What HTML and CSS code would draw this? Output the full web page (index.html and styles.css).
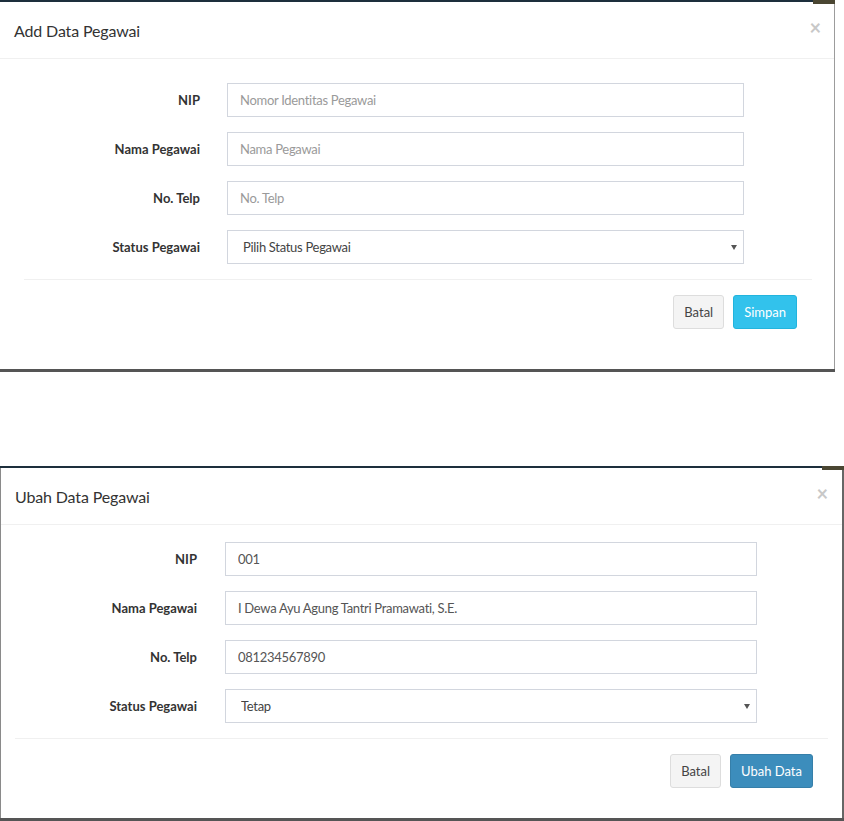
FILE: index.html
```html
<!DOCTYPE html>
<html>
<head>
<meta charset="utf-8">
<link rel="stylesheet" href="styles.css">
<title>Data Pegawai</title>
</head>
<body>
<section class="shot shot-add">
  <div class="strip"><span class="strip-img"></span></div>
  <div class="modal modal-add">
    <div class="modal-header">
      <h4 class="modal-title">Add Data Pegawai</h4>
      <span class="close">×</span>
    </div>
    <form class="form">
      <div class="row"><label>NIP</label><input class="control" placeholder="Nomor Identitas Pegawai"></div>
      <div class="row"><label>Nama Pegawai</label><input class="control" placeholder="Nama Pegawai"></div>
      <div class="row"><label>No. Telp</label><input class="control" placeholder="No. Telp"></div>
      <div class="row"><label>Status Pegawai</label><div class="select-wrap"><select class="control select"><option>Pilih Status Pegawai</option></select></div></div>
      <div class="footer">
        <button type="button" class="btn btn-default">Batal</button>
        <button type="button" class="btn btn-info">Simpan</button>
      </div>
    </form>
  </div>
  <div class="base"></div>
</section>

<section class="shot shot-edit">
  <div class="strip"><span class="strip-img"></span></div>
  <div class="modal modal-edit">
    <div class="modal-header">
      <h4 class="modal-title">Ubah Data Pegawai</h4>
      <span class="close">×</span>
    </div>
    <form class="form">
      <div class="row"><label>NIP</label><input class="control" value="001"></div>
      <div class="row"><label>Nama Pegawai</label><input class="control" value="I Dewa Ayu Agung Tantri Pramawati, S.E."></div>
      <div class="row"><label>No. Telp</label><input class="control" value="081234567890"></div>
      <div class="row"><label>Status Pegawai</label><div class="select-wrap"><select class="control select"><option>Tetap</option></select></div></div>
      <div class="footer">
        <button type="button" class="btn btn-default">Batal</button>
        <button type="button" class="btn btn-primary">Ubah Data</button>
      </div>
    </form>
  </div>
  <div class="base"></div>
</section>
</body>
</html>
```

FILE: styles.css
```css
* { box-sizing: border-box; }
html, body { margin: 0; padding: 0; background: #fff; }
body {
  width: 844px;
  font-family: Lato, "Liberation Sans", sans-serif;
  font-size: 13px;
  color: #333;
}

.shot { display: flex; flex-direction: column; }
.shot-add { width: 835px; }
.shot-edit { width: 844px; margin-top: 94px; }

.strip { position: relative; height: 2px; background: #1d2f3c; }
.strip-img { position: absolute; right: 0; top: 0; width: 22px; height: 4px; background: #4a4632; }

.modal { background: #fff; display: flex; flex-direction: column; }
.modal-add { height: 367px; border-right: 1px solid #9c9c9c; }
.modal-edit { height: 350px; border-left: 1px solid #8a8a8a; border-right: 2px solid #666; }

.base { height: 3px; background: #555; }

.modal-header {
  display: flex;
  justify-content: space-between;
  align-items: center;
  height: 57px;
  padding: 0 13px 0 14px;
  border-bottom: 1px solid #f0f0f0;
}
.modal-edit .modal-header { padding-left: 14px; padding-right: 14px; }
.modal-title {
  margin: 0;
  font-size: 16px;
  font-weight: 400;
  letter-spacing: -0.15px;
  color: #333;
}
.close {
  font-size: 20px;
  font-weight: 700;
  color: #c8c8c8;
  line-height: 1;
  margin-top: -6px;
}

.form { display: flex; flex-direction: column; gap: 15px; }
.modal-add .form { margin: 24px 22px 0 24px; }
.modal-edit .form { margin: 17px 14px 0 14px; }

.row { display: grid; align-items: center; }
.modal-add .row { grid-template-columns: 176px 517px; column-gap: 27px; }
.modal-edit .row { grid-template-columns: 182px 532px; column-gap: 28px; }

.row label {
  text-align: right;
  font-weight: 700;
  color: #333;
}

.control {
  display: block;
  width: 100%;
  height: 34px;
  border: 1px solid #d2d6de;
  border-radius: 0;
  padding: 6px 12px;
  font-family: inherit;
  font-size: 13px;
  letter-spacing: -0.3px;
  color: #555;
  background: #fff;
  outline: none;
}
.control::placeholder { color: #9a9a9a; }

.select-wrap { position: relative; }
.select {
  -webkit-appearance: none;
  appearance: none;
  padding-left: 15px;
  color: #444;
}
.select-wrap::after {
  content: "";
  position: absolute;
  right: 7px;
  top: 15px;
  border-left: 3px solid transparent;
  border-right: 3px solid transparent;
  border-top: 5px solid #555;
}

.footer {
  display: flex;
  justify-content: flex-end;
  gap: 9px;
  border-top: 1px solid #f0f0f0;
  padding: 15px 15px 0 0;
}

.btn {
  height: 34px;
  padding: 6px 10px;
  font-family: inherit;
  font-size: 13px;
  border-radius: 3px;
  border: 1px solid transparent;
  line-height: 20px;
}
.btn-default { background: #f4f4f4; border-color: #ddd; color: #444; }
.btn-info { background: #32c2ec; border-color: #22b4dd; color: #fff; }
.btn-primary { background: #3c8dbc; border-color: #367fa9; color: #fff; }
```
